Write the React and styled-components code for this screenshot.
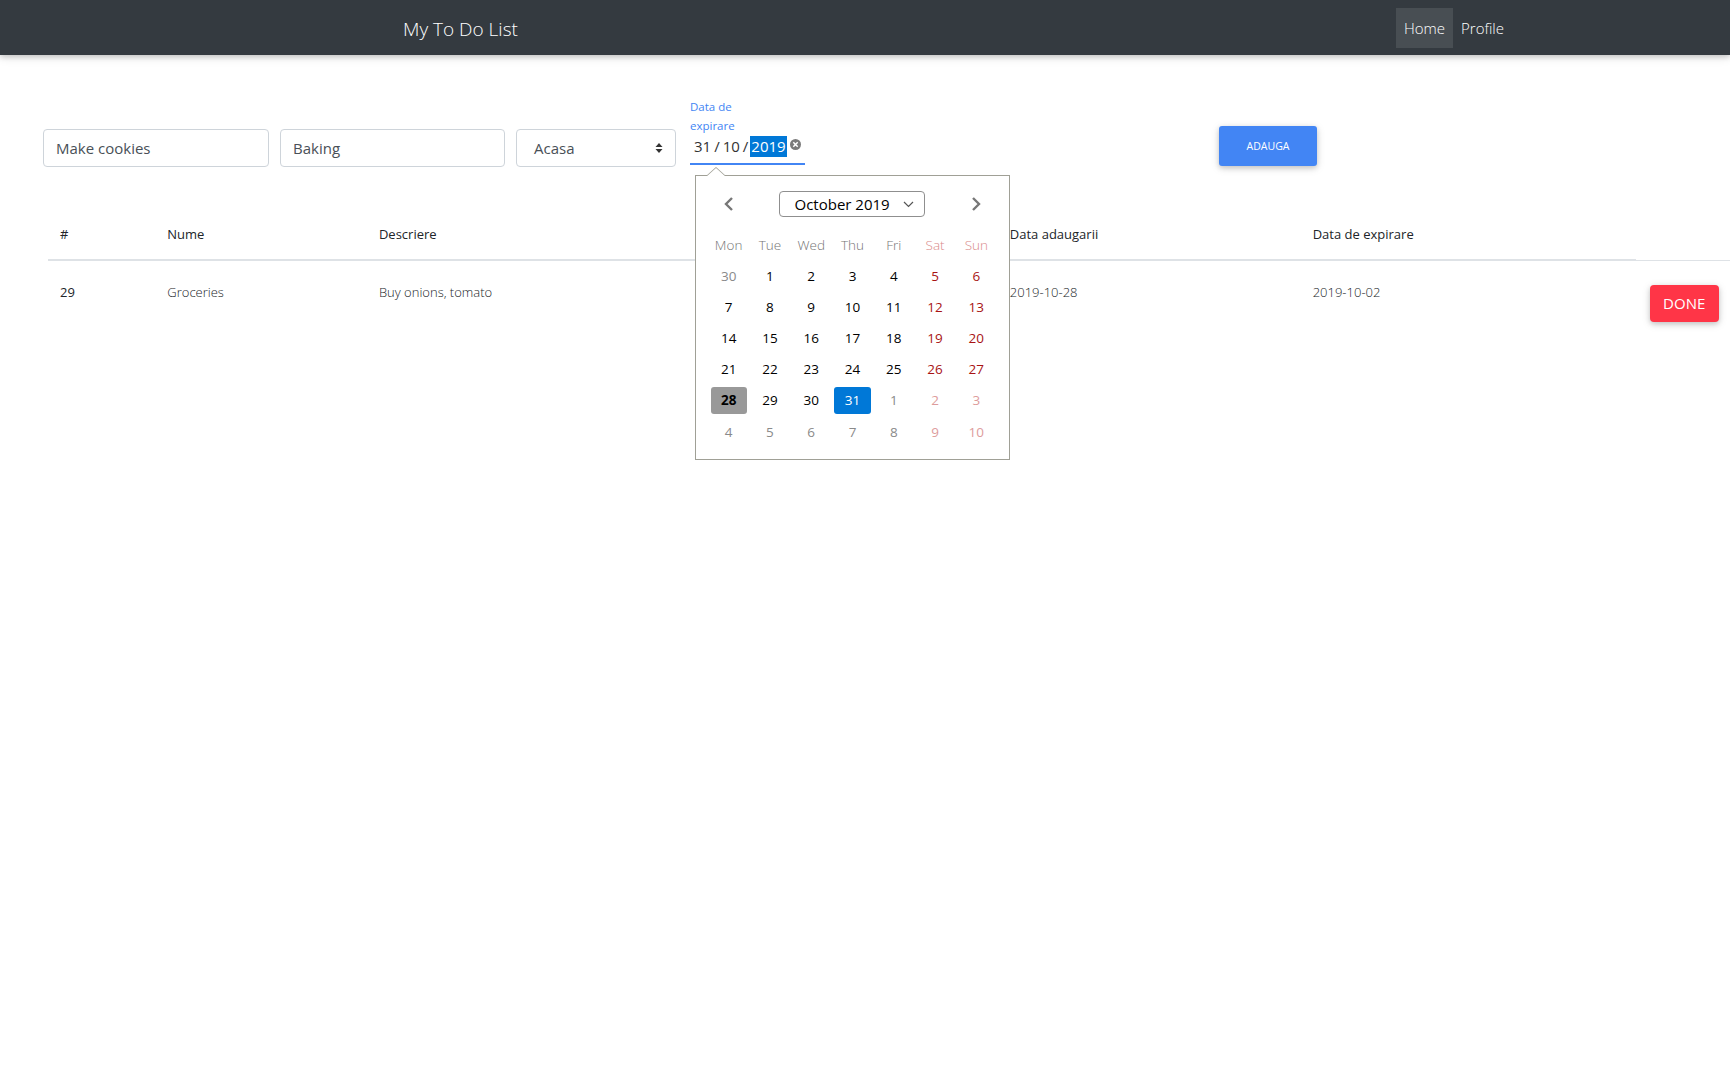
import React from "react";
import styled, { createGlobalStyle } from "styled-components";

const GlobalStyle = createGlobalStyle`
  * { box-sizing: border-box; }
  html, body { height: 100%; }
  body {
    margin: 0;
    background: #fff;
    color: #212529;
    font-family: "Open Sans", "Liberation Sans", sans-serif;
    font-weight: 300;
  }
  #root { min-height: 100vh; }
`;

const Navbar = styled.nav`
  height: 55px;
  background: #343a40;
  box-shadow: 0 2px 5px 0 rgba(0, 0, 0, 0.16), 0 2px 10px 0 rgba(0, 0, 0, 0.12);
  display: flex;
  align-items: center;
  padding: 0 218px 0 403px;
`;

const Brand = styled.a`
  color: #fff;
  font-size: 19px;
  font-weight: 300;
  text-decoration: none;
  margin-top: 3px;
`;

const NavList = styled.div`
  margin-left: auto;
  display: flex;
  margin-top: 1px;
`;

const NavLink = styled.a`
  height: 40px;
  padding: 0 8px;
  display: flex;
  align-items: center;
  color: #fff;
  font-size: 15px;
  font-weight: 300;
  background: ${(p) => (p.$active ? "rgba(255,255,255,0.1)" : "transparent")};
`;

const Main = styled.main`
  padding-left: 43px;
  min-height: calc(100vh - 55px);
`;

const FormRow = styled.div`
  display: flex;
  align-items: flex-end;
  margin-top: 42px;
`;

const TextInput = styled.input`
  width: ${(p) => p.$w}px;
  height: 38px;
  margin-right: 11px;
  border: 1px solid #ced4da;
  border-radius: 4px;
  padding: 0 12px;
  font-family: "Open Sans", "Liberation Sans", sans-serif;
  font-size: 15px;
  font-weight: 400;
  color: #495057;
  outline: none;
`;

const SelectBox = styled.div`
  width: 160px;
  height: 38px;
  border: 1px solid #ced4da;
  border-radius: 4px;
  padding: 0 12px 0 17px;
  display: flex;
  align-items: center;
  justify-content: space-between;
  font-size: 15px;
  font-weight: 400;
  color: #495057;
`;

const DateField = styled.div`
  position: relative;
  width: 115px;
  margin-left: 14px;
  margin-bottom: 2px;
`;

const DateLabel = styled.label`
  display: block;
  color: #4285f4;
  font-size: 11.5px;
  font-weight: 400;
  line-height: 19px;
`;

const DateValue = styled.div`
  display: flex;
  align-items: center;
  height: 22px;
  padding: 0 0 6px 3px;
  box-sizing: content-box;
  font-size: 15px;
  font-weight: 400;
  color: #333;
  border-bottom: 2px solid #4285f4;
`;

const Sep = styled.span`
  margin: 0 2px;
`;

const Segment = styled.span`
  padding: 0 1px;
  line-height: 21px;
  background: ${(p) => (p.$selected ? "#0078d7" : "transparent")};
  color: ${(p) => (p.$selected ? "#fff" : "inherit")};
`;

const ClearBtn = styled.span`
  display: flex;
  margin-left: 3px;
  margin-top: -3px;
`;

const Popup = styled.div`
  position: absolute;
  top: calc(100% + 10px);
  left: 5px;
  width: 315px;
  background: #fff;
  border: 1px solid #a0a096;
  padding: 15px 12px 12px;
  z-index: 10;
  font-size: 13.5px;
  font-weight: 400;

  &::before,
  &::after {
    content: "";
    position: absolute;
    left: 10px;
    border-left: 10px solid transparent;
    border-right: 10px solid transparent;
  }
  &::before {
    top: -9px;
    border-bottom: 9px solid #a0a096;
  }
  &::after {
    top: -8px;
    border-bottom: 9px solid #fff;
  }
`;

const CalGrid = styled.div`
  display: grid;
  grid-template-columns: repeat(7, 1fr);
`;

const NavRow = styled(CalGrid)`
  height: 26px;
  align-items: center;
  margin-bottom: 12px;
`;

const Arrow = styled.span`
  display: flex;
  justify-content: center;
  grid-column: ${(p) => p.$col};
`;

const MonthSelect = styled.div`
  grid-column: 2 / 7;
  justify-self: center;
  width: 146px;
  height: 26px;
  border: 1px solid #8f8f8f;
  border-radius: 4px;
  display: flex;
  align-items: center;
  justify-content: space-between;
  padding: 0 10px 0 14px;
  font-size: 15px;
  color: #000;
`;

const WeekRow = styled(CalGrid)`
  height: 31px;
  align-items: center;
`;

const WeekDay = styled.div`
  text-align: center;
  font-weight: 300;
  color: ${(p) => (p.$weekend ? "#d98a8a" : "#757575")};
`;

const DayGrid = styled(CalGrid)`
  grid-auto-rows: 31.2px;
`;

const dayColor = (p) => {
  if (p.$kind === "selected") return "#fff";
  if (p.$outside) return p.$weekend ? "#dd9c9c" : "#8a8a8a";
  return p.$weekend ? "#a81414" : "#000";
};

const Day = styled.div`
  margin: 2px 2.5px;
  border-radius: 3px;
  display: flex;
  align-items: center;
  justify-content: center;
  color: ${dayColor};
  font-weight: ${(p) => (p.$kind === "today" ? 700 : 400)};
  background: ${(p) =>
    p.$kind === "today" ? "#999" : p.$kind === "selected" ? "#0078d7" : "transparent"};
`;

const AddButton = styled.button`
  margin-left: 414px;
  margin-bottom: 1px;
  width: 98px;
  height: 40px;
  border: none;
  border-radius: 3px;
  background: #4285f4;
  color: #fff;
  font-family: "Open Sans", "Liberation Sans", sans-serif;
  font-size: 10.5px;
  font-weight: 400;
  text-transform: uppercase;
  box-shadow: 0 2px 5px 0 rgba(0, 0, 0, 0.16), 0 2px 10px 0 rgba(0, 0, 0, 0.12);
`;

const Table = styled.table`
  width: calc(100% - 5px);
  margin: 46px 0 0 5px;
  border-collapse: collapse;
  table-layout: fixed;
  font-size: 13px;
`;

const Th = styled.th`
  text-align: left;
  font-weight: 400;
  padding: 12px 12px 16px;
  border-bottom: 2px solid #dee2e6;
  white-space: nowrap;
`;

const Td = styled.td`
  text-align: left;
  vertical-align: top;
  padding: 22px 12px 20px;
  border-top: 1px solid #dee2e6;
  font-weight: ${(p) => (p.$head ? 400 : 300)};
  white-space: nowrap;
`;

const DoneButton = styled.button`
  margin: 2px 0 0 2px;
  width: 69px;
  height: 37px;
  border: none;
  border-radius: 4px;
  background: #ff3547;
  color: #fff;
  font-family: "Open Sans", "Liberation Sans", sans-serif;
  font-size: 15px;
  font-weight: 400;
  box-shadow: 0 2px 5px 0 rgba(0, 0, 0, 0.16), 0 2px 10px 0 rgba(0, 0, 0, 0.12);
`;

const weekDays = ["Mon", "Tue", "Wed", "Thu", "Fri", "Sat", "Sun"];

const weeks = [
  [[30, true], [1], [2], [3], [4], [5], [6]],
  [[7], [8], [9], [10], [11], [12], [13]],
  [[14], [15], [16], [17], [18], [19], [20]],
  [[21], [22], [23], [24], [25], [26], [27]],
  [[28, false, "today"], [29], [30], [31, false, "selected"], [1, true], [2, true], [3, true]],
  [[4, true], [5, true], [6, true], [7, true], [8, true], [9, true], [10, true]],
];

const columns = [107, 211, 324, 305, 302, 334, 94];

function Chevron({ dir }) {
  const pts = dir === "left" ? "9,2 3,8 9,14" : "3,2 9,8 3,14";
  return (
    <svg width="12" height="16" viewBox="0 0 12 16">
      <polyline points={pts} fill="none" stroke="#777" strokeWidth="2.4" />
    </svg>
  );
}

function Calendar() {
  return (
    <Popup>
      <NavRow>
        <Arrow $col={1}><Chevron dir="left" /></Arrow>
        <MonthSelect>
          October 2019
          <svg width="11" height="7" viewBox="0 0 11 7">
            <polyline points="1,1 5.5,5.5 10,1" fill="none" stroke="#555" strokeWidth="1.2" />
          </svg>
        </MonthSelect>
        <Arrow $col={7}><Chevron dir="right" /></Arrow>
      </NavRow>
      <WeekRow>
        {weekDays.map((d, i) => (
          <WeekDay key={d} $weekend={i > 4}>{d}</WeekDay>
        ))}
      </WeekRow>
      <DayGrid>
        {weeks.map((w, wi) =>
          w.map(([n, outside, kind], i) => (
            <Day key={wi + "-" + i} $weekend={i > 4} $outside={outside} $kind={kind}>
              {n}
            </Day>
          ))
        )}
      </DayGrid>
    </Popup>
  );
}

export default function App() {
  return (
    <>
      <GlobalStyle />
      <Navbar>
        <Brand>My To Do List</Brand>
        <NavList>
          <NavLink $active>Home</NavLink>
          <NavLink>Profile</NavLink>
        </NavList>
      </Navbar>
      <Main>
        <FormRow>
          <TextInput $w={226} defaultValue="Make cookies" />
          <TextInput $w={225} defaultValue="Baking" />
          <SelectBox>
            Acasa
            <svg width="8" height="12" viewBox="0 0 8 12">
              <polygon points="4,1 7.5,5 0.5,5" fill="#333" />
              <polygon points="0.5,7 7.5,7 4,11" fill="#333" />
            </svg>
          </SelectBox>
          <DateField>
            <DateLabel>Data de<br />expirare</DateLabel>
            <DateValue>
              <Segment>31</Segment>
              <Sep>/</Sep>
              <Segment>10</Segment>
              <Sep>/</Sep>
              <Segment $selected>2019</Segment>
              <ClearBtn>
                <svg width="11" height="11" viewBox="0 0 11 11">
                  <circle cx="5.5" cy="5.5" r="5.5" fill="#7a7a7a" />
                  <path d="M3.3 3.3 L7.7 7.7 M7.7 3.3 L3.3 7.7" stroke="#fff" strokeWidth="1.5" />
                </svg>
              </ClearBtn>
            </DateValue>
            <Calendar />
          </DateField>
          <AddButton>Adauga</AddButton>
        </FormRow>
        <Table>
          <colgroup>
            {columns.map((w, i) => (
              <col key={i} style={{ width: w }} />
            ))}
          </colgroup>
          <thead>
            <tr>
              <Th>#</Th>
              <Th>Nume</Th>
              <Th>Descriere</Th>
              <Th />
              <Th>Data adaugarii</Th>
              <Th>Data de expirare</Th>
            </tr>
          </thead>
          <tbody>
            <tr>
              <Td $head>29</Td>
              <Td>Groceries</Td>
              <Td>Buy onions, tomato</Td>
              <Td />
              <Td>2019-10-28</Td>
              <Td>2019-10-02</Td>
              <Td>
                <DoneButton>DONE</DoneButton>
              </Td>
            </tr>
          </tbody>
        </Table>
      </Main>
    </>
  );
}
